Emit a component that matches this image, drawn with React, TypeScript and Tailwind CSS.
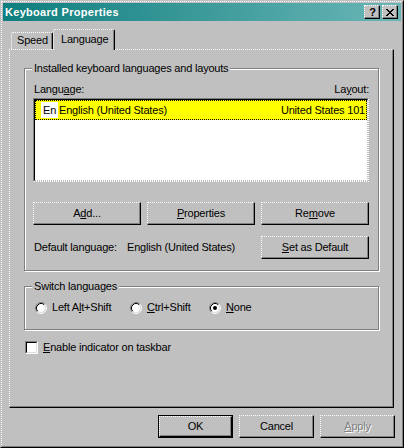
import React from "react";

const RAISED =
  "border [--tw-border-style:dotted_solid_solid_dotted] border-t-white border-l-white border-r-black border-b-black shadow-[inset_-1px_-1px_0_#808080]";

function Btn({ children, className = "" }: { children: React.ReactNode; className?: string }) {
  return (
    <div className={`flex h-[23px] items-center justify-center bg-[#c0c0c0] ${RAISED} ${className}`}>
      {children}
    </div>
  );
}

function Group({
  label,
  className = "",
  children,
}: {
  label: string;
  className?: string;
  children: React.ReactNode;
}) {
  return (
    <div
      className={`relative border border-[#808080] shadow-[inset_1px_1px_0_#fff,1px_1px_0_#fff] ${className}`}
    >
      <div className="absolute left-[7px] -top-[7px] bg-[#c0c0c0] px-[2px] leading-[13px]">{label}</div>
      {children}
    </div>
  );
}

function Radio({ checked = false }: { checked?: boolean }) {
  return (
    <svg width="12" height="12" viewBox="0 0 12 12" className="shrink-0">
      <circle cx="6" cy="6" r="4.5" fill="#fff" />
      <path d="M2.11 9.89A5.5 5.5 0 0 1 9.89 2.11" stroke="#808080" fill="none" />
      <path d="M9.89 2.11A5.5 5.5 0 0 1 2.11 9.89" stroke="#fff" fill="none" />
      <path d="M2.82 9.18A4.5 4.5 0 0 1 9.18 2.82" stroke="#000" fill="none" />
      <path d="M9.18 2.82A4.5 4.5 0 0 1 2.82 9.18" stroke="#dfdfdf" fill="none" />
      {checked && <circle cx="6" cy="6" r="2" fill="#000" />}
    </svg>
  );
}

function CloseGlyph() {
  return (
    <svg width="8" height="7" viewBox="0 0 8 7" shapeRendering="crispEdges">
      <path
        d="M0 0h2v1H0zM6 0h2v1H6zM1 1h2v1H1zM5 1h2v1H5zM2 2h4v1H2zM3 3h2v1H3zM2 4h4v1H2zM1 5h2v1H1zM5 5h2v1H5zM0 6h2v1H0zM6 6h2v1H6z"
        fill="#000"
      />
    </svg>
  );
}

export default function App() {
  return (
    <div className="font-['Liberation_Sans',Arial,sans-serif] text-[11px] leading-[13px] tracking-[-0.2px] text-black">
      <div className="h-[448px] w-[404px] border border-t-[#c0c0c0] border-l-[#c0c0c0] border-r-black border-b-black bg-[#c0c0c0]">
        <div className="flex h-full w-full flex-col border [--tw-border-style:dotted_solid_solid_dotted] border-t-white border-l-white border-r-[#808080] border-b-[#808080] p-[1px]">
          {/* Title bar */}
          <div className="flex h-[18px] shrink-0 items-center bg-[linear-gradient(to_right,#0f7e7e,#6ab6b6)] pl-[2px] pr-[3px]">
            <span className="font-bold tracking-[0.3px] text-white">Keyboard Properties</span>
            <div className={`ml-auto flex h-[14px] w-[16px] items-center justify-center bg-[#c0c0c0] ${RAISED}`}>
              <span className="pl-[1px] text-[11px] font-bold leading-none tracking-normal">?</span>
            </div>
            <div className={`ml-[2px] flex h-[14px] w-[16px] items-center justify-center bg-[#c0c0c0] ${RAISED}`}>
              <CloseGlyph />
            </div>
          </div>

          {/* Body */}
          <div className="flex flex-col pl-[6px] pr-[6px] pt-[8px]">
            {/* Tabs */}
            <div className="flex h-[20px] items-end pl-[2px]">
              <div className="h-[17px] w-[42px] rounded-t-[2px] border border-b-0 [--tw-border-style:dotted_solid_solid_dotted] border-t-white border-l-white border-r-black shadow-[inset_-1px_0_0_#808080] pl-[5px] pt-[1px]">
                Speed
              </div>
              <div className="relative z-10 -mb-[1px] h-[21px] w-[62px] rounded-t-[2px] border border-b-0 [--tw-border-style:dotted_solid_solid_dotted] border-t-white border-l-white border-r-black bg-[#c0c0c0] shadow-[inset_-1px_0_0_#808080] pl-[7px] pt-[3px]">
                Language
              </div>
            </div>

            {/* Panel */}
            <div className="flex h-[359px] w-[385px] flex-col border [--tw-border-style:dotted_solid_solid_dotted] border-t-white border-l-white border-r-black border-b-black shadow-[inset_-1px_-1px_0_#808080] pl-[14px] pt-[18px]">
              <Group label="Installed keyboard languages and layouts" className="flex h-[203px] w-[355px] flex-col pl-[8px] pt-[14px]">
                <div className="flex h-[13px] w-[336px] justify-between">
                  <span className="pl-[1px]">
                    Langu<u>a</u>ge:
                  </span>
                  <span>
                    La<u>y</u>out:
                  </span>
                </div>
                <div className="mt-[2px] h-[84px] w-[336px] border [--tw-border-style:solid_dotted_dotted_solid] border-t-[#808080] border-l-[#808080] border-r-white border-b-white bg-[#c0c0c0]">
                  <div className="h-full w-full border [--tw-border-style:solid_dotted_dotted_solid] border-t-black border-l-black border-r-[#c0c0c0] border-b-[#c0c0c0] bg-white">
                    <div className="flex h-[20px] items-center border border-dotted border-black bg-[#ffff00] pl-[5px] pr-[1px]">
                      <span className="h-[16px] w-[17px] bg-white pl-[2px] leading-[16px]">En</span>
                      <span className="ml-[1px]">English (United States)</span>
                      <span className="ml-auto">United States 101</span>
                    </div>
                  </div>
                </div>
                <div className="mt-[20px] flex gap-[6px]">
                  <Btn className="w-[108px]">
                    <span>
                      A<u>d</u>d...
                    </span>
                  </Btn>
                  <Btn className="w-[108px]">
                    <span>
                      <u>P</u>roperties
                    </span>
                  </Btn>
                  <Btn className="w-[108px]">
                    <span>
                      Re<u>m</u>ove
                    </span>
                  </Btn>
                </div>
                <div className="mt-[11px] flex h-[23px] w-[336px] items-center">
                  <span className="w-[94px] pl-[1px]">Default language:</span>
                  <span>English (United States)</span>
                  <Btn className="ml-auto w-[108px]">
                    <span>
                      <u>S</u>et as Default
                    </span>
                  </Btn>
                </div>
              </Group>

              <Group label="Switch languages" className="mt-[15px] flex h-[44px] w-[355px] flex-col pl-[10px] pt-[14px]">
                <div className="flex h-[13px] items-center">
                  <div className="flex w-[95px] items-center">
                    <Radio />
                    <span className="ml-[5px]">
                      Left A<u>l</u>t+Shift
                    </span>
                  </div>
                  <div className="flex w-[79px] items-center">
                    <Radio />
                    <span className="ml-[5px]">
                      <u>C</u>trl+Shift
                    </span>
                  </div>
                  <div className="flex items-center">
                    <Radio checked />
                    <span className="ml-[5px]">
                      <u>N</u>one
                    </span>
                  </div>
                </div>
              </Group>

              <div className="ml-[1px] mt-[11px] flex h-[13px] items-center">
                <div className="h-[13px] w-[13px] shrink-0 border border-t-[#808080] border-l-[#808080] border-r-white border-b-white">
                  <div className="h-full w-full border border-t-black border-l-black border-r-[#dfdfdf] border-b-[#dfdfdf] bg-white" />
                </div>
                <span className="ml-[5px]">
                  <u>E</u>nable indicator on taskbar
                </span>
              </div>
            </div>

            {/* Dialog buttons */}
            <div className="mt-[7px] flex justify-end gap-[6px]">
              <div className="flex h-[23px] w-[75px] border border-black">
                <div className={`flex flex-1 items-center justify-center bg-[#c0c0c0] ${RAISED}`}>OK</div>
              </div>
              <Btn className="w-[75px]">Cancel</Btn>
              <Btn className="w-[75px]">
                <span className="text-[#808080] [text-shadow:1px_1px_0_#fff]">
                  <u>A</u>pply
                </span>
              </Btn>
            </div>
          </div>
        </div>
      </div>
    </div>
  );
}
